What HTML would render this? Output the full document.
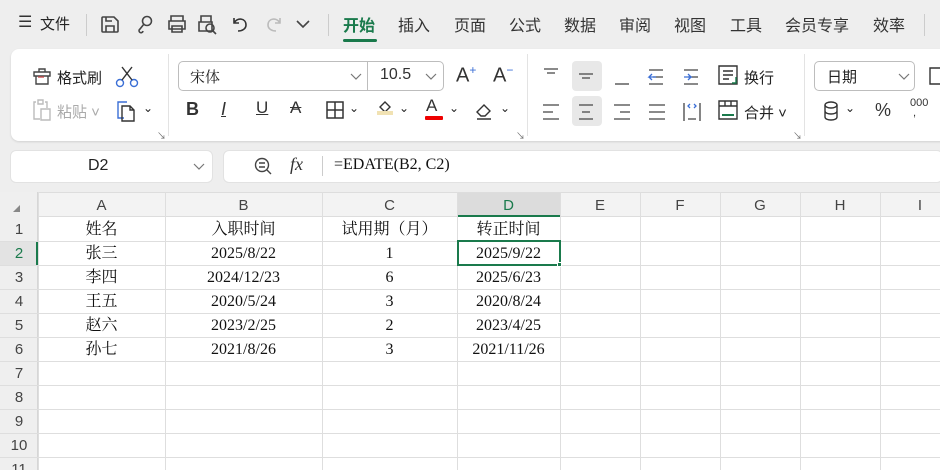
<!DOCTYPE html>
<html><head><meta charset="utf-8">
<style>
*{margin:0;padding:0;box-sizing:border-box}
html,body{width:940px;height:470px;overflow:hidden}
body{background:#eeeeee;font-family:"Liberation Sans","Noto Sans CJK SC",sans-serif;color:#222;position:relative}
.a{position:absolute;white-space:nowrap}
.tab{position:absolute;top:12px;font-size:16px;color:#333}
svg{position:absolute;overflow:visible}
.cell{position:absolute;font-family:"Liberation Serif","Noto Serif CJK SC",serif;font-size:16px;color:#111;text-align:center;line-height:24px}
.rh{position:absolute;left:0;width:38px;text-align:center;font-size:15px;color:#444;line-height:24px}
.ch{position:absolute;top:193px;height:24px;line-height:26px;text-align:center;font-size:15px;color:#444}
</style></head><body>
<div class="a" style="left:18px;top:12px;font-size:16px;color:#333">☰</div>
<div class="a" style="left:40px;top:13px;font-size:15px;color:#222">文件</div>
<div class="a" style="left:86px;top:14px;width:1px;height:22px;background:#ccc"></div>
<svg style="left:100px;top:14px" width="20" height="20" fill="none" stroke="#444" stroke-width="1.6"><path d="M3 3h11l4 4v10a1 1 0 0 1-1 1H3a1 1 0 0 1-1-1V4a1 1 0 0 1 1-1z"/><path d="M6 18v-6h8v6M6 3v4h6"/></svg>
<svg style="left:136px;top:14px" width="20" height="20" fill="none" stroke="#444" stroke-width="1.6"><circle cx="11" cy="7" r="4.5"/><path d="M8 10L4 15a2 2 0 1 0 3 2"/></svg>
<svg style="left:166px;top:14px" width="22" height="20" fill="none" stroke="#444" stroke-width="1.6"><path d="M5 7V2h12v5M3 7h16v8H3zM6 12h10v6H6z"/></svg>
<svg style="left:197px;top:14px" width="22" height="20" fill="none" stroke="#444" stroke-width="1.6"><path d="M4 8V2h10v6M2 8h13v9H2z"/><circle cx="13" cy="14" r="4"/><path d="M16 17l3 3"/></svg>
<svg style="left:230px;top:14px" width="20" height="20" fill="none" stroke="#333" stroke-width="1.6"><path d="M4 4v5h5M4 9c3-6 12-5 12 2 0 4-4 6-8 6"/></svg>
<svg style="left:264px;top:14px" width="20" height="20" fill="none" stroke="#bbb" stroke-width="1.6"><path d="M16 4v5h-5M16 9c-3-6-12-5-12 2 0 4 4 6 8 6"/></svg>
<svg style="left:296px;top:20px" width="14" height="10" fill="none" stroke="#444" stroke-width="1.6"><path d="M1 1l6 6 6-6"/></svg>
<div class="a" style="left:328px;top:14px;width:1px;height:22px;background:#ccc"></div>
<div class="tab" style="left:343px;font-weight:bold;color:#1a7a4c">开始</div>
<div class="a" style="left:343px;top:39px;width:34px;height:3px;background:#1a7a4c;border-radius:2px"></div>
<div class="tab" style="left:398px">插入</div>
<div class="tab" style="left:454px">页面</div>
<div class="tab" style="left:509px">公式</div>
<div class="tab" style="left:564px">数据</div>
<div class="tab" style="left:619px">审阅</div>
<div class="tab" style="left:674px">视图</div>
<div class="tab" style="left:730px">工具</div>
<div class="tab" style="left:785px">会员专享</div>
<div class="tab" style="left:873px">效率</div>
<div class="a" style="left:924px;top:14px;width:1px;height:22px;background:#ccc"></div>
<div class="a" style="left:11px;top:49px;width:940px;height:92px;background:#fff;border-radius:8px;box-shadow:0 1px 2px rgba(0,0,0,.12)"></div>
<svg style="left:32px;top:67px" width="20" height="18" fill="none" stroke="#444" stroke-width="1.4"><path d="M7 5V2h6v3M2 5h16v4H2zM4 9v8h12V9"/><path d="M6 10h6" stroke="#c55" /></svg>
<div class="a" style="left:57px;top:67px;font-size:15px">格式刷</div>
<svg style="left:115px;top:66px" width="24" height="22" fill="none" stroke="#3b6fd6" stroke-width="1.4"><circle cx="5" cy="17" r="3.5"/><circle cx="19" cy="17" r="3.5"/><path d="M7 14L17 1M17 14L7 1" stroke="#333"/></svg>
<svg style="left:32px;top:99px" width="20" height="22" fill="none" stroke="#bbb" stroke-width="1.4"><path d="M4 3H2v17h6M13 3h2v6M6 1h5v4H6zM9 10h9v11H9z"/></svg>
<div class="a" style="left:57px;top:101px;font-size:15px;color:#aaa">粘贴 ˅</div>
<svg style="left:117px;top:100px" width="20" height="22" fill="none" stroke="#333" stroke-width="1.4"><path d="M7 18H1V2h9" stroke="#3b6fd6"/><path d="M5 6h8l4 4v11H5zM13 6v4h4"/></svg>
<div class="a" style="left:143px;top:101px;font-size:12px">⌄</div>
<div class="a" style="left:157px;top:129px;font-size:9px;color:#666">↘</div>
<div class="a" style="left:168px;top:54px;width:1px;height:82px;background:#e3e3e3"></div>
<div class="a" style="left:178px;top:61px;width:266px;height:30px;border:1px solid #bdbdbd;border-radius:5px"></div>
<div class="a" style="left:367px;top:62px;width:1px;height:28px;background:#bdbdbd"></div>
<div class="a" style="left:190px;top:66px;font-size:15px;font-family:'Noto Serif CJK SC',serif">宋体</div>
<svg style="left:350px;top:73px" width="12" height="8" fill="none" stroke="#777" stroke-width="1.2"><path d="M1 1l5 5 5-5"/></svg>
<div class="a" style="left:380px;top:66px;font-size:16px;color:#333">10.5</div>
<svg style="left:425px;top:73px" width="12" height="8" fill="none" stroke="#777" stroke-width="1.2"><path d="M1 1l5 5 5-5"/></svg>
<div class="a" style="left:456px;top:63px;font-size:20px;color:#333">A<sup style="font-size:12px;color:#3b6fd6">+</sup></div>
<div class="a" style="left:493px;top:63px;font-size:20px;color:#333">A<sup style="font-size:12px;color:#3b6fd6">−</sup></div>
<div class="a" style="left:186px;top:99px;font-size:18px;font-weight:bold;color:#333">B</div>
<div class="a" style="left:221px;top:99px;font-size:18px;font-style:italic;color:#333;text-decoration:underline">I</div>
<div class="a" style="left:256px;top:98px;font-size:17px;color:#333;text-decoration:underline">U</div>
<div class="a" style="left:290px;top:98px;font-size:17px;color:#333;text-decoration:line-through">A</div>
<svg style="left:326px;top:101px" width="18" height="18" fill="none" stroke="#333" stroke-width="1.5"><path d="M1 1h16v16H1zM9 1v16M1 9h16"/></svg>
<div class="a" style="left:349px;top:101px;font-size:12px">⌄</div>
<svg style="left:375px;top:99px" width="20" height="22" fill="none" stroke="#333" stroke-width="1.4"><path d="M5 8l5-5 5 5-5 5z"/><path d="M2 14h16" stroke="#f1e2b3" stroke-width="4"/></svg>
<div class="a" style="left:399px;top:101px;font-size:12px">⌄</div>
<div class="a" style="left:426px;top:96px;font-size:17px;color:#333">A</div>
<div class="a" style="left:425px;top:116px;width:18px;height:4px;background:#e00;border-radius:1px"></div>
<div class="a" style="left:449px;top:101px;font-size:12px">⌄</div>
<svg style="left:475px;top:101px" width="20" height="20" fill="none" stroke="#333" stroke-width="1.4"><path d="M2 11l7-7 6 6-5 5H6zM2 18h14"/></svg>
<div class="a" style="left:500px;top:101px;font-size:12px">⌄</div>
<div class="a" style="left:516px;top:129px;font-size:9px;color:#666">↘</div>
<div class="a" style="left:527px;top:54px;width:1px;height:82px;background:#e3e3e3"></div>
<div class="a" style="left:572px;top:61px;width:30px;height:30px;background:#e8e8e8;border-radius:4px"></div>
<div class="a" style="left:572px;top:96px;width:30px;height:30px;background:#e8e8e8;border-radius:4px"></div>
<svg style="left:543px;top:66px" width="220" height="60" fill="none" stroke="#444" stroke-width="1.3">
<path d="M1 3h14M4 7h8"/>
<path d="M36 8h14M39 12h8"/>
<path d="M72 18h14"/>
<path d="M106 4h14M110 11h10M106 18h14" /><path d="M113 11h-7l3-3M106 11l3 3" stroke="#3b6fd6"/>
<path d="M141 4h14M145 11h10M141 18h14"/><path d="M141 11h7l-3-3M148 11l-3 3" stroke="#3b6fd6"/>
<path d="M0 39h16M0 46h10M0 53h16"/>
<path d="M36 39h14M39 46h8M36 53h14"/>
<path d="M71 39h16M77 46h10M71 53h16"/>
<path d="M106 39h16M106 46h16M106 53h16"/>
<path d="M141 37v18M157 37v18M145 53h8" /><path d="M147 38l-2 2 2 2M151 38l2 2-2 2" stroke="#3b6fd6"/>
</svg>
<svg style="left:718px;top:65px" width="22" height="22" fill="none" stroke="#333" stroke-width="1.4"><path d="M1 1h18v18H1zM5 6h10M5 10h10M5 14h6"/><path d="M18 12v6h-4" stroke="#1a7a4c"/></svg>
<div class="a" style="left:744px;top:67px;font-size:15px">换行</div>
<svg style="left:718px;top:100px" width="22" height="22" fill="none" stroke="#333" stroke-width="1.4"><path d="M1 1h18v18H1zM1 6h18M7 1v5M13 1v5"/><path d="M4 15h12" stroke="#1a7a4c" stroke-width="2"/></svg>
<div class="a" style="left:744px;top:102px;font-size:15px">合并 ˅</div>
<div class="a" style="left:793px;top:129px;font-size:9px;color:#666">↘</div>
<div class="a" style="left:804px;top:54px;width:1px;height:82px;background:#e3e3e3"></div>
<div class="a" style="left:814px;top:61px;width:101px;height:30px;border:1px solid #bdbdbd;border-radius:5px"></div>
<div class="a" style="left:827px;top:66px;font-size:15px">日期</div>
<svg style="left:898px;top:73px" width="12" height="8" fill="none" stroke="#777" stroke-width="1.2"><path d="M1 1l5 5 5-5"/></svg>
<svg style="left:928px;top:66px" width="14" height="20" fill="none" stroke="#333" stroke-width="1.4"><path d="M12 2H2v16h12"/></svg>
<svg style="left:823px;top:101px" width="16" height="20" fill="none" stroke="#333" stroke-width="1.4"><ellipse cx="8" cy="4" rx="6" ry="3"/><path d="M2 4v12c0 4 12 4 12 0V4M2 10c0 4 12 4 12 0"/></svg>
<div class="a" style="left:845px;top:101px;font-size:12px">⌄</div>
<div class="a" style="left:875px;top:100px;font-size:18px;color:#333">%</div>
<div class="a" style="left:910px;top:98px;font-size:11px;color:#333;line-height:10px">000<br>&nbsp;,</div>
<div class="a" style="left:10px;top:150px;width:203px;height:33px;background:#fff;border-radius:6px;border:1px solid #e2e2e2"></div>
<div class="a" style="left:88px;top:157px;font-size:16px;color:#222">D2</div>
<svg style="left:193px;top:163px" width="12" height="8" fill="none" stroke="#777" stroke-width="1.2"><path d="M1 1l5 5 5-5"/></svg>
<div class="a" style="left:223px;top:150px;width:720px;height:33px;background:#fff;border-radius:6px;border:1px solid #e2e2e2"></div>
<svg style="left:254px;top:157px" width="18" height="18" fill="none" stroke="#444" stroke-width="1.4"><circle cx="8" cy="8" r="6.5"/><path d="M13 13l4 4M5 6h6M5 10h6"/></svg>
<div class="a" style="left:290px;top:154px;font-size:18px;font-style:italic;font-family:'Liberation Serif',serif;color:#333">fx</div>
<div class="a" style="left:322px;top:156px;width:1px;height:20px;background:#ccc"></div>
<div class="a" style="left:334px;top:156px;font-size:16px;font-family:'Liberation Serif','Noto Serif CJK SC',serif;color:#111">=EDATE(B2, C2)</div>
<div class="a" style="left:0;top:192px;width:940px;height:278px;background:#fff"></div>
<div class="a" style="left:0;top:192px;width:940px;height:25px;background:#f3f3f3;border-top:1px solid #ddd;border-bottom:1px solid #ddd"></div>
<div class="a" style="left:0;top:192px;width:38px;height:278px;background:#efefef;border-right:1px solid #d6d6d6"></div>
<div class="a" style="left:457px;top:193px;width:103px;height:24px;background:#dcdcdc;border-bottom:2px solid #1a7a4c"></div>
<div class="a" style="left:0;top:241px;width:38px;height:24px;background:#e3e3e3"></div>
<div class="a" style="left:36px;top:241px;width:2px;height:24px;background:#1a7a4c"></div>
<div class="a" style="left:13px;top:205px;width:0;height:0;border-left:7px solid transparent;border-bottom:7px solid #888"></div>
<svg style="left:0;top:192px" width="940" height="278" stroke="#dedede" stroke-width="1">
<path d="M38.5 0v278M165.5 0v278M322.5 0v278M457.5 0v278M560.5 0v278M640.5 0v278M720.5 0v278M800.5 0v278M880.5 0v278"/>
<path d="M0 49.5h940M0 73.5h940M0 97.5h940M0 121.5h940M0 145.5h940M0 169.5h940M0 193.5h940M0 217.5h940M0 241.5h940M0 265.5h940"/>
</svg>
<div class="ch" style="left:38px;width:127px">A</div>
<div class="ch" style="left:165px;width:157px">B</div>
<div class="ch" style="left:322px;width:135px">C</div>
<div class="ch" style="left:457px;width:103px;color:#1a7a4c">D</div>
<div class="ch" style="left:560px;width:80px">E</div>
<div class="ch" style="left:640px;width:80px">F</div>
<div class="ch" style="left:720px;width:80px">G</div>
<div class="ch" style="left:800px;width:80px">H</div>
<div class="ch" style="left:880px;width:80px">I</div>
<div class="rh" style="top:218px">1</div>
<div class="rh" style="top:242px;color:#1a7a4c">2</div>
<div class="rh" style="top:266px">3</div>
<div class="rh" style="top:290px">4</div>
<div class="rh" style="top:314px">5</div>
<div class="rh" style="top:338px">6</div>
<div class="rh" style="top:362px">7</div>
<div class="rh" style="top:386px">8</div>
<div class="rh" style="top:410px">9</div>
<div class="rh" style="top:434px">10</div>
<div class="rh" style="top:458px">11</div>
<div class="cell" style="left:38px;width:127px;top:218px">姓名</div>
<div class="cell" style="left:165px;width:157px;top:218px">入职时间</div>
<div class="cell" style="left:322px;width:135px;top:218px">试用期（月）</div>
<div class="cell" style="left:457px;width:103px;top:218px">转正时间</div>
<div class="cell" style="left:38px;width:127px;top:242px">张三</div>
<div class="cell" style="left:165px;width:157px;top:242px">2025/8/22</div>
<div class="cell" style="left:322px;width:135px;top:242px">1</div>
<div class="cell" style="left:457px;width:103px;top:242px">2025/9/22</div>
<div class="cell" style="left:38px;width:127px;top:266px">李四</div>
<div class="cell" style="left:165px;width:157px;top:266px">2024/12/23</div>
<div class="cell" style="left:322px;width:135px;top:266px">6</div>
<div class="cell" style="left:457px;width:103px;top:266px">2025/6/23</div>
<div class="cell" style="left:38px;width:127px;top:290px">王五</div>
<div class="cell" style="left:165px;width:157px;top:290px">2020/5/24</div>
<div class="cell" style="left:322px;width:135px;top:290px">3</div>
<div class="cell" style="left:457px;width:103px;top:290px">2020/8/24</div>
<div class="cell" style="left:38px;width:127px;top:314px">赵六</div>
<div class="cell" style="left:165px;width:157px;top:314px">2023/2/25</div>
<div class="cell" style="left:322px;width:135px;top:314px">2</div>
<div class="cell" style="left:457px;width:103px;top:314px">2023/4/25</div>
<div class="cell" style="left:38px;width:127px;top:338px">孙七</div>
<div class="cell" style="left:165px;width:157px;top:338px">2021/8/26</div>
<div class="cell" style="left:322px;width:135px;top:338px">3</div>
<div class="cell" style="left:457px;width:103px;top:338px">2021/11/26</div>
<div class="a" style="left:457px;top:240px;width:104px;height:26px;border:2px solid #1a7a4c"></div>
<div class="a" style="left:557px;top:262px;width:5px;height:5px;background:#1a7a4c;border:1px solid #fff"></div>
</body></html>
